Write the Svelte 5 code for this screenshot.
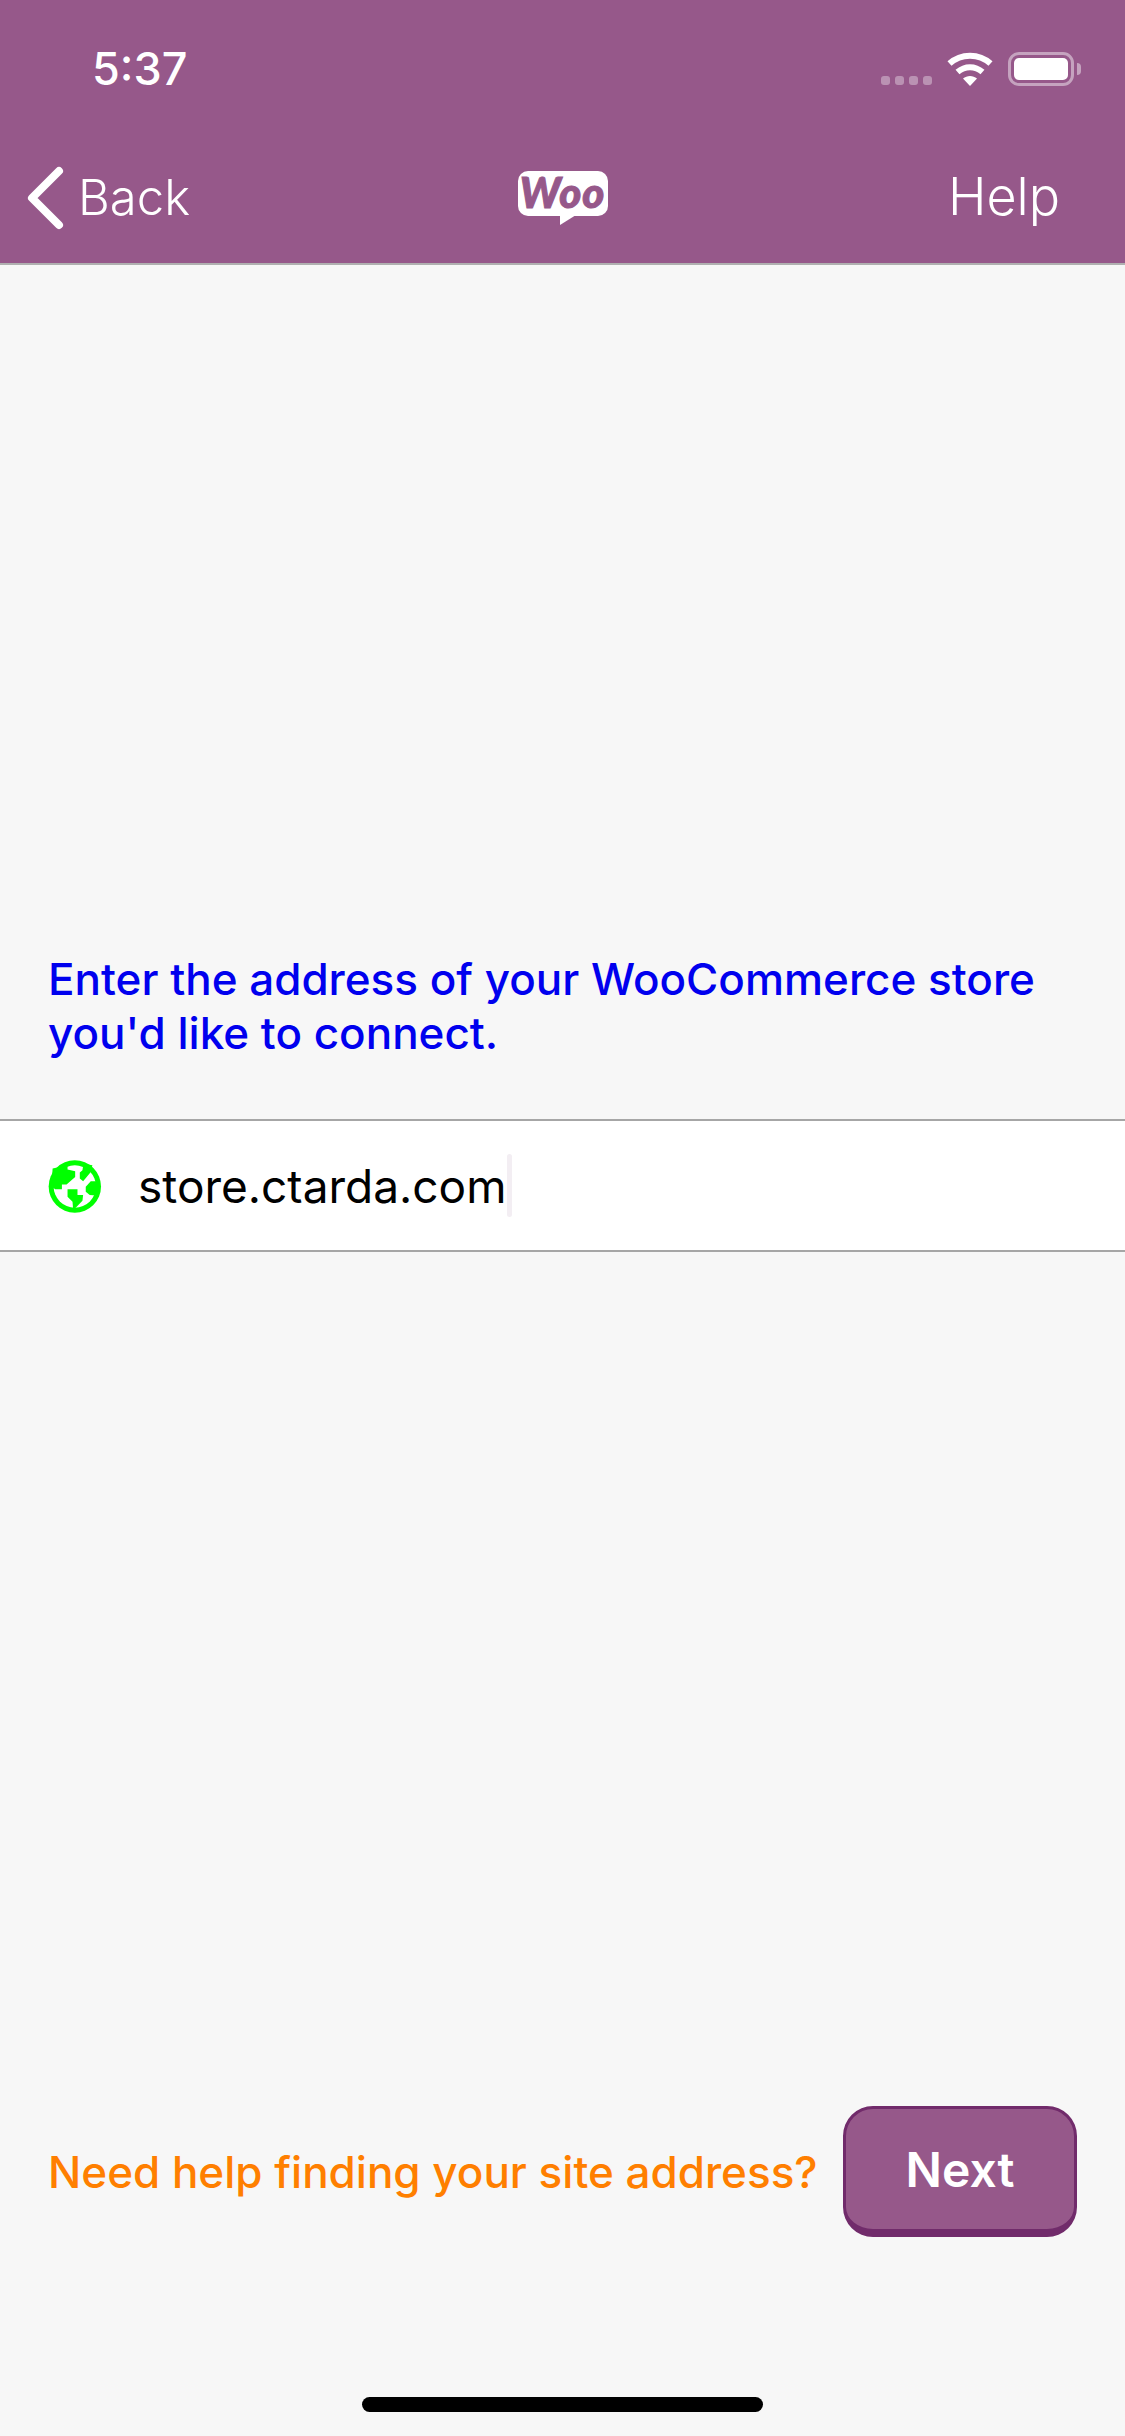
<script>
  const dots = [0, 1, 2, 3];
</script>

<div class="page">
  <header class="top">
    <div class="status">
      <span class="time">5:37</span>
      <div class="indicators">
        <div class="dots">
          {#each dots as d (d)}<i class="dot"></i>{/each}
        </div>
        <svg class="wifi" viewBox="0 0 46 34" width="46" height="34" aria-hidden="true">
          <path d="M2.5 11.5C14 1 32 1 43.500 11.500" fill="none" stroke="#fff" stroke-width="6"/>
          <path d="M10.500 20C18 13.500 28 13.500 35.500 20" fill="none" stroke="#fff" stroke-width="6"/>
          <path d="M16 26.500C20 23 26 23 30 26.500L23 34Z" fill="#fff"/>
        </svg>
        <div class="battery"><div class="level"></div></div>
        <i class="nub"></i>
      </div>
    </div>
    <nav class="nav">
      <div class="back">
        <svg viewBox="0 0 38 64" width="38" height="64" aria-hidden="true">
          <path d="M33 5L6 32L33 59" fill="none" stroke="#fff" stroke-width="8" stroke-linecap="round" stroke-linejoin="round"/>
        </svg>
        <span>Back</span>
      </div>
      <div class="logo"><span>Woo</span><i class="tail"></i></div>
      <div class="help">Help</div>
    </nav>
  </header>

  <p class="prompt">Enter the address of your WooCommerce store you'd like to connect.</p>

  <div class="field">
    <svg class="globe" viewBox="130 165 175 175" width="58" height="58" aria-hidden="true">
      <circle cx="217" cy="254" r="79" fill="#00ff00"/>
      <circle cx="217" cy="254" r="64" fill="#fff"/>
      <path fill="#00ff00" d="M146 254L158 262H178V248H192L218 225V208L195 203V190L150 200Z"/>
      <path fill="#00ff00" d="M243 185L240 205L232 212V230L242 238L264 212L270 190Z"/>
      <path fill="#00ff00" d="M285 238H265L250 255V270L262 280L290 282Z"/>
      <path fill="#00ff00" d="M195 262H225V280H242L240 297L218 320L212 325L210 300L195 285Z"/>
    </svg>
    <span class="value">store.ctarda.com</span><i class="caret"></i>
  </div>

  <div class="footer">
    <span class="link">Need help finding your site address?</span>
    <button class="next">Next</button>
  </div>

  <div class="home"><i></i></div>
</div>

<style>
  :global(body) {
    margin: 0;
    background: #f7f7f7;
  }
  .page {
    width: 1125px;
    height: 2436px;
    display: flex;
    flex-direction: column;
    background: #f7f7f7;
    font-family: Inter, "Liberation Sans", sans-serif;
    overflow: hidden;
  }
  .top {
    height: 263px;
    background: #96588a;
    border-bottom: 2px solid #b0b0b0;
    color: #fff;
    box-sizing: content-box;
    display: flex;
    flex-direction: column;
  }
  .status {
    height: 136px;
    display: flex;
    justify-content: space-between;
    align-items: flex-start;
    padding: 0 44px 0 92px;
  }
  .time {
    font-size: 45px;
    font-weight: 500;
    line-height: 50px;
    margin-top: 44px;
  }
  .indicators {
    display: flex;
    align-items: flex-start;
    margin-top: 52px;
  }
  .dots {
    display: flex;
    gap: 5px;
    margin: 24px 15px 0 0;
  }
  .dot {
    width: 9px;
    height: 9px;
    border-radius: 3px;
    background: rgba(255, 255, 255, 0.35);
  }
  .wifi {
    margin-right: 15px;
  }
  .battery {
    width: 66px;
    height: 34px;
    box-sizing: border-box;
    border: 3px solid rgba(255, 255, 255, 0.45);
    border-radius: 11px;
    padding: 3px;
  }
  .level {
    height: 100%;
    background: #fff;
    border-radius: 5px;
  }
  .nub {
    width: 4px;
    height: 12px;
    margin: 11px 0 0 3px;
    border-radius: 0 6px 6px 0;
    background: rgba(255, 255, 255, 0.45);
  }
  .nav {
    height: 127px;
    display: grid;
    grid-template-columns: 1fr auto 1fr;
    align-items: flex-start;
    padding: 0 65px 0 26px;
  }
  .back {
    display: flex;
    align-items: flex-start;
    gap: 14px;
    font-size: 49px;
    line-height: 60px;
    font-weight: 300;
  }
  .back svg {
    margin-top: 30px;
  }
  .back span {
    margin-top: 32px;
  }
  .help {
    justify-self: end;
    font-size: 52px;
    line-height: 60px;
    font-weight: 300;
    margin-top: 31px;
  }
  .logo {
    position: relative;
    width: 90px;
    height: 45px;
    margin: 35px 0 0 39px;
    border-radius: 10px;
    background: #fff;
    color: #96588a;
    font-family: Lato, sans-serif;
    font-weight: 900;
    font-style: italic;
    font-size: 42px;
    line-height: 42px;
    letter-spacing: 1px;
    text-align: center;
    -webkit-text-stroke: 1px #96588a;
  }
  .tail {
    position: absolute;
    left: 42px;
    top: 44px;
    width: 0;
    height: 0;
    border-left: 16px solid transparent;
    border-top: 10px solid #fff;
    transform: scaleX(-1);
  }
  .prompt {
    margin: 687px 0 0;
    padding: 0 48px;
    color: #0000ee;
    font-size: 44px;
    font-weight: 450;
    line-height: 54px;
  }
  .field {
    margin-top: 59px;
    height: 129px;
    display: flex;
    align-items: center;
    background: #fff;
    border-top: 2px solid #a6a6a6;
    border-bottom: 2px solid #a6a6a6;
    padding-left: 46px;
  }
  .value {
    margin-left: 34px;
    font-size: 46px;
    color: #000;
  }
  .caret {
    width: 5px;
    height: 63px;
    margin-left: 1px;
    border-radius: 3px;
    background: #f3eef3;
  }
  .footer {
    margin-top: 854px;
    display: flex;
    justify-content: space-between;
    align-items: center;
    padding: 0 48px;
  }
  .link {
    color: #ff7f00;
    font-size: 44px;
    font-weight: 450;
  }
  .next {
    width: 234px;
    height: 131px;
    box-sizing: border-box;
    background: #96588a;
    color: #fff;
    border: 3px solid #712b6b;
    border-bottom-width: 8px;
    border-radius: 30px;
    font-family: inherit;
    font-size: 48px;
    font-weight: 600;
    padding: 0;
  }
  .home {
    margin-top: 160px;
    display: flex;
    justify-content: center;
  }
  .home i {
    width: 401px;
    height: 15px;
    border-radius: 8px;
    background: #000;
  }
</style>
